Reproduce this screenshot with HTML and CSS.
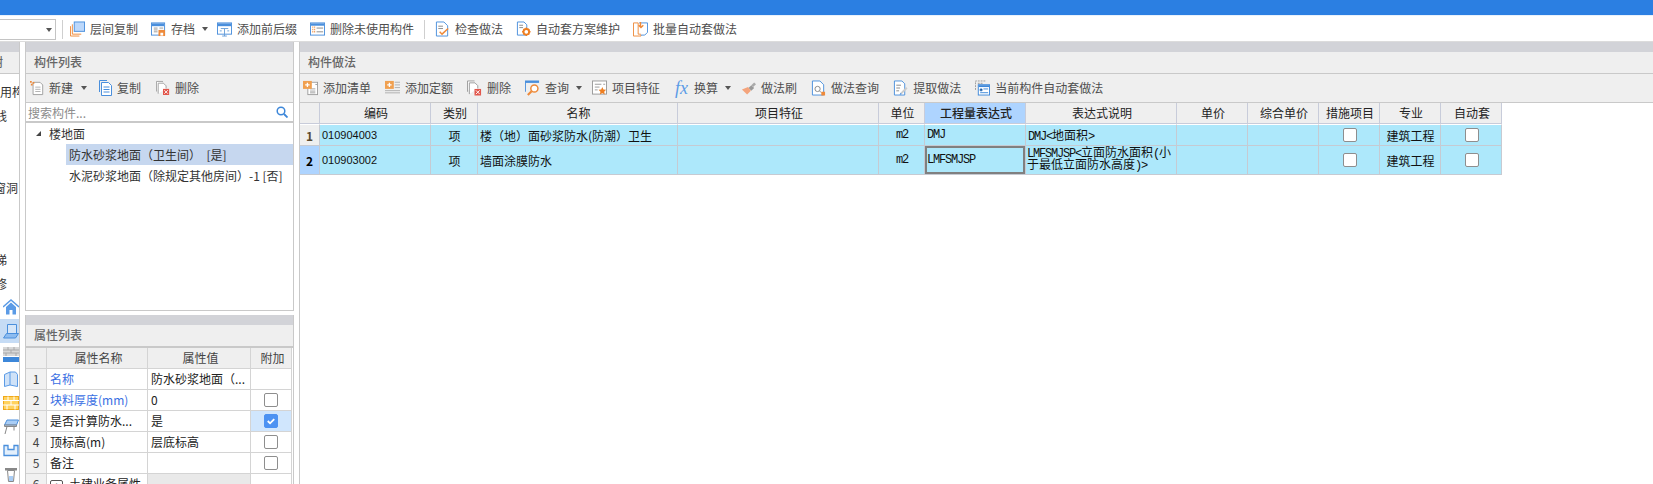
FILE: index.html
```html
<!DOCTYPE html>
<html lang="zh">
<head>
<meta charset="utf-8">
<title>构件做法</title>
<link rel="stylesheet" href="styles.css">
</head>
<body>
<div class="titlebar"></div>
<div class="maintools">
  <div class="combo"><span class="caret"></span></div>
  <span class="sep first"></span>
  <div class="tool"><svg viewBox="0 0 16 16"><rect x="4.500" y=".5" width="11" height="10" fill="#bcd8fb" stroke="#4a8fdc"/><path d="M2.500 3v10.500H12M.5 5v10.500H10" fill="none" stroke="#ee8a3a"/></svg><span>层间复制</span></div>
  <div class="tool"><svg viewBox="0 0 16 16"><rect x=".5" y="1.500" width="14" height="13" fill="#fff" stroke="#4a8fdc"/><rect x="1" y="2" width="13" height="3" fill="#4a8fdc"/><path d="M3 7h4M3 9h4M3 11h4M9 7h4" stroke="#999"/><rect x="8" y="9" width="7" height="6.500" fill="#ee8a3a"/><rect x="10" y="12" width="3" height="3" fill="#fff"/></svg><span>存档</span><span class="caret"></span></div>
  <div class="tool"><svg viewBox="0 0 16 16"><rect x=".5" y="1.500" width="15" height="12" fill="#fff" stroke="#4a8fdc"/><rect x="1" y="2" width="14" height="3" fill="#4a8fdc"/><path d="M4 7.500h8M8 7.500v8M5.500 15.500h5M3 10h2M11 10h2" stroke="#6a9fd8" fill="none"/></svg><span>添加前后缀</span></div>
  <div class="tool"><svg viewBox="0 0 16 16"><rect x=".5" y="1.500" width="15" height="13" fill="#fff" stroke="#4a8fdc"/><rect x="1" y="2" width="14" height="2.500" fill="#4a8fdc"/><path d="M2.500 6h3M2.500 8.500h3M2.500 11h3" stroke="#ee8a3a" stroke-width="1.500" stroke-dasharray="1 1"/><path d="M7 7h7M7 11h7" stroke="#888"/></svg><span>删除未使用构件</span></div>
  <span class="sep"></span>
  <div class="tool"><svg viewBox="0 0 16 16"><path d="M1.500.5h8l4 4v11h-12z" fill="#fff" stroke="#4a8fdc"/><path d="M3.500 5h5M3.500 7.500h5" stroke="#888"/><path d="M5 11l2.500 2.500L14 7.500" fill="none" stroke="#ee8a3a" stroke-width="1.600"/></svg><span>检查做法</span></div>
  <div class="tool"><svg viewBox="0 0 16 16"><path d="M1.500.5h7l3 3v11h-10z" fill="#fff" stroke="#4a8fdc"/><path d="M3.500 4h4M3.500 6.500h4" stroke="#888"/><circle cx="11" cy="11" r="3" fill="#fff" stroke="#ee7f22" stroke-width="2"/><path d="M11 6.500v2M11 13.500v2M6.500 11h2M13.500 11h2M8 8l1 1M13 13l1 1M14 8l-1 1M9 13l-1 1" stroke="#ee7f22" stroke-width="1.500"/></svg><span>自动套方案维护</span></div>
  <div class="tool"><svg viewBox="0 0 16 16"><path d="M.5 1.500h5v12h3v2h-8z" fill="#fff" stroke="#ee8a3a" stroke-width="1"/><path d="M6.500 1.500h9v10l-3 3h-4" fill="#fff" stroke="#4a8fdc"/><path d="M8 .5v5M6 4l2.500 2.500L11 4" fill="none" stroke="#ee8a3a" stroke-width="1.500"/></svg><span>批量自动套做法</span></div>
</div>

<div class="workspace">
  <aside class="strip">
    <div class="band"></div>
    <div class="title strip-title">树</div>
    <div class="nav">
      <div class="nav-row">用构件</div>
      <div class="nav-row cut">线</div>
      <div class="nav-row"></div>
      <div class="nav-row"></div>
      <div class="nav-row cut-wide">窗洞</div>
      <div class="nav-row"></div>
      <div class="nav-row"></div>
      <div class="nav-row cut">梯</div>
      <div class="nav-row cut">修</div>
      <div class="nav-row"><svg viewBox="0 0 16 16"><path d="M0 8l8-7 8 7" fill="none" stroke="#5b9be6" stroke-width="1.500"/><path d="M3 8l5-4.500L13 8v7.500H9.500V11h-3v4.500H3z" fill="#5b9be6"/></svg></div>
      <div class="nav-row active"><svg viewBox="0 0 16 16"><path d="M4.500 1.500h9v9h-9z" fill="#d6e6f8" stroke="#4a8fdc"/><path d="M3.500 10.500h12l-3 4.500H.5z" fill="#8dbcf0" stroke="#4a8fdc"/></svg></div>
      <div class="nav-row"><svg viewBox="0 0 16 16"><rect y="0" width="16" height="9" fill="#d8d8d8"/><path d="M0 3h16M0 6h16M5 0v3M11 0v3M8 3v3M3 6v3M13 6v3" stroke="#aaa"/><rect y="10" width="16" height="5" fill="#3d87d9"/></svg></div>
      <div class="nav-row"><svg viewBox="0 0 16 16"><path d="M1.500 3.500L7 1v13l-5.500 1.500zM7 1h5.500l2 2.500v12L7 14" fill="#cfe2f8" stroke="#5b9be6"/></svg></div>
      <div class="nav-row"><svg viewBox="0 0 16 16"><rect x=".5" y="1.500" width="15" height="13" fill="#ffd25e" stroke="#f0a818"/><path d="M0 5.500h16M0 10h16M5 1.500v4M11 1.500v4M8 5.500V10M4 10v4.500M12 10v4.500" stroke="#fff"/></svg></div>
      <div class="nav-row"><svg viewBox="0 0 16 16"><path d="M4 1h11.500l-2 5H1.500z" fill="#a9cdf5" stroke="#4a8fdc"/><path d="M1.500 6h12v1.500h-12zM4 7.500L2 15M11 7.500v4" fill="none" stroke="#888"/></svg></div>
      <div class="nav-row"><svg viewBox="0 0 16 16"><path d="M1 2.500h4v4h6v-4h4v10H1z" fill="#e4f0fc" stroke="#4a8fdc" stroke-width="1.300"/></svg></div>
      <div class="nav-row"><svg viewBox="0 0 16 16"><path d="M2 1h12v2.500H2z" fill="#888"/><path d="M4.500 3.500h7l-1 11h-5z" fill="#fff" stroke="#888"/><path d="M6 9h4v5H6z" fill="#a9cdf5"/></svg></div>
    </div>
  </aside>

  <div class="middle">
    <section class="panel list-panel">
      <div class="band"></div>
      <div class="title">构件列表</div>
      <div class="subtools list-tools">
        <div class="tool t-new"><svg viewBox="0 0 16 16"><path d="M3.500 1.500h8l3 3v11h-11z" fill="#fff" stroke="#999"/><path d="M6 7h6M6 9.500h6M6 12h6" stroke="#aaa"/><path d="M0 0h2v2H0zM3 1h2v2H3zM1 3h2v2H1z" fill="#ee8a3a"/></svg><span>新建</span><span class="caret"></span></div>
        <div class="tool t-copy"><svg viewBox="0 0 13 16"><path d="M.5 12V.5H8" fill="none" stroke="#4a8fdc"/><path d="M2.500 2.500h7l3 3v10h-10z" fill="#fff" stroke="#4a8fdc"/><path d="M4.500 7h6M4.500 9.500h6M4.500 12h6" stroke="#4a8fdc"/></svg><span>复制</span></div>
        <div class="tool t-del"><svg viewBox="0 0 16 16"><path d="M.5 12V.5H8M2.500 14.500v-12h6l3 3v3" fill="#fff" stroke="#999"/><rect x="8" y="9" width="7" height="7" fill="#e2574c"/><path d="M9.500 10.500l4 4M13.500 10.500l-4 4" stroke="#fff"/></svg><span>删除</span></div>
      </div>
      <div class="search"><span class="placeholder">搜索构件...</span><svg viewBox="0 0 12 12"><circle cx="5" cy="5" r="3.800" fill="none" stroke="#3d87d9" stroke-width="1.500"/><path d="M8 8l3.500 3.500" stroke="#3d87d9" stroke-width="1.800"/></svg></div>
      <div class="tree">
        <div class="tree-root"><span class="twist"></span>楼地面</div>
        <div class="tree-item selected">防水砂浆地面（卫生间）  [是]</div>
        <div class="tree-item">水泥砂浆地面（除规定其他房间）-1 [否]</div>
      </div>
    </section>

    <section class="panel attr-panel">
      <div class="band"></div>
      <div class="title attr-title">属性列表</div>
      <table class="attr">
        <colgroup><col class="a0"><col class="a1"><col class="a2"><col class="a3"></colgroup>
        <thead><tr><th></th><th>属性名称</th><th>属性值</th><th>附加</th></tr></thead>
        <tbody>
          <tr><td class="idx">1</td><td class="link">名称</td><td>防水砂浆地面（...</td><td></td></tr>
          <tr><td class="idx">2</td><td class="link">块料厚度(mm)</td><td>0</td><td class="ck"><span class="box"></span></td></tr>
          <tr><td class="idx">3</td><td>是否计算防水...</td><td>是</td><td class="ck on"><span class="box checked"><svg viewBox="0 0 13 13"><path d="M3 6.500l2.500 2.500L10 4.500" fill="none" stroke="#fff" stroke-width="2"/></svg></span></td></tr>
          <tr><td class="idx">4</td><td>顶标高(m)</td><td>层底标高</td><td class="ck"><span class="box"></span></td></tr>
          <tr><td class="idx">5</td><td>备注</td><td></td><td class="ck"><span class="box"></span></td></tr>
          <tr><td class="idx">6</td><td class="group"><span class="plus">+</span>土建业务属性</td><td class="shade"></td><td></td></tr>
        </tbody>
      </table>
    </section>
  </div>

  <section class="panel right">
    <div class="band"></div>
    <div class="title">构件做法</div>
    <div class="subtools right-tools">
      <div class="tool"><svg viewBox="0 0 17 16"><rect x="5.500" y="1.500" width="11" height="14" fill="#fff" stroke="#999"/><path d="M8 9h6M8 11.500h6M8 13.500h6M14 4h2" stroke="#999"/><rect y="0" width="10" height="9" fill="#f0a050"/><path d="M5 2v5M2.500 4.500h5" stroke="#fff" stroke-width="1.500"/></svg><span>添加清单</span></div>
      <div class="tool"><svg viewBox="0 0 17 16"><rect y="0" width="10" height="9" fill="#f0a050"/><path d="M5 2v5M2.500 4.500h5" stroke="#fff" stroke-width="1.500"/><path d="M11 1.500h6M11 4.500h6M11 7.500h6M0 11h17M0 13.500h17" stroke="#aaa"/></svg><span>添加定额</span></div>
      <div class="tool"><svg viewBox="0 0 16 16"><path d="M.5 12V.5H8M2.500 14.500v-12h6l3 3v3" fill="#fff" stroke="#999"/><rect x="8" y="9" width="7" height="7" fill="#e2574c"/><path d="M9.500 10.500l4 4M13.500 10.500l-4 4" stroke="#fff"/></svg><span>删除</span></div>
      <div class="tool"><svg viewBox="0 0 16 16"><path d="M.5 12V1.500h14" fill="none" stroke="#4a8fdc"/><rect y="0" width="15" height="2.500" fill="#4a8fdc"/><circle cx="10" cy="8.500" r="3.800" fill="#fff" stroke="#ee8a3a" stroke-width="1.600"/><path d="M7 11.500L3 15.500" stroke="#ee8a3a" stroke-width="2.200"/></svg><span>查询</span><span class="caret"></span></div>
      <div class="tool"><svg viewBox="0 0 16 16"><rect x=".5" y=".5" width="15" height="14" fill="#fff" stroke="#999"/><path d="M3 4h7M3 7h5M3 10h3M12 4h2" stroke="#999"/><path d="M11 7l1.200 2.600 2.800.3-2 2 .6 2.900-2.600-1.400-2.600 1.400.6-2.900-2-2 2.800-.3z" fill="#ee7f22"/></svg><span>项目特征</span></div>
      <div class="tool fx"><i>fx</i><span>换算</span><span class="caret"></span></div>
      <div class="tool"><svg viewBox="0 0 16 16"><path d="M8 8l3-3 3 3-3 3z" fill="#999"/><path d="M11 5l3-3 2 2-3 3z" fill="#aaa"/><path d="M7.500 7L1 9.500l5.500 5.500 4-4z" fill="#f4a47c"/></svg><span>做法刷</span></div>
      <div class="tool"><svg viewBox="0 0 16 16"><path d="M1.500.5h8l4 4v11h-12z" fill="#fff" stroke="#4a8fdc"/><circle cx="7" cy="9" r="2.800" fill="none" stroke="#888"/><path d="M9 11l2 2" stroke="#888"/><rect x="11" y="12" width="4" height="4" fill="#ee8a3a"/></svg><span>做法查询</span></div>
      <div class="tool"><svg viewBox="0 0 16 16"><path d="M1.500.5h8l3 3v12h-11z" fill="#fff" stroke="#4a8fdc"/><path d="M3.500 5h5M3.500 8h4M3.500 11h3" stroke="#888"/><path d="M8 13l6-6 1.500 1.500-6 6z" fill="#ccc"/><path d="M8 13l-1 2.500 2.500-1z" fill="#4a8fdc"/></svg><span>提取做法</span></div>
      <div class="tool"><svg viewBox="0 0 16 16"><path d="M.5 10V.5H11M3 3h6" fill="none" stroke="#999" stroke-dasharray="2 1"/><rect x="3.500" y="4.500" width="12" height="11" fill="#fff" stroke="#3d87d9"/><rect x="4" y="5" width="11" height="2" fill="#3d87d9"/><path d="M5.500 9h2v2h-2zM9 9h5M5.500 13h8.500" stroke="#3d87d9"/></svg><span>当前构件自动套做法</span></div>
    </div>
    <table class="grid">
      <colgroup>
        <col class="g0"><col class="g1"><col class="g2"><col class="g3"><col class="g4"><col class="g5"><col class="g6"><col class="g7"><col class="g8"><col class="g9"><col class="g10"><col class="g11"><col class="g12">
      </colgroup>
      <thead>
        <tr><th></th><th>编码</th><th>类别</th><th>名称</th><th>项目特征</th><th>单位</th><th class="picked">工程量表达式</th><th>表达式说明</th><th>单价</th><th>综合单价</th><th>措施项目</th><th>专业</th><th>自动套</th></tr>
      </thead>
      <tbody>
        <tr class="r1">
          <td class="num">1</td><td class="code">010904003</td><td class="mid">项</td><td>楼（地）面砂浆防水(防潮）卫生</td><td></td><td class="mono mid"><span class="lat">m2</span></td><td class="mono"><span class="lat">DMJ</span></td><td class="mono"><span class="lat">DMJ&lt;</span>地面积<span class="lat">&gt;</span></td><td></td><td></td><td class="mid"><span class="box"></span></td><td class="mid">建筑工程</td><td class="mid"><span class="box"></span></td>
        </tr>
        <tr class="r2">
          <td class="num cur">2</td><td class="code">010903002</td><td class="mid">项</td><td>墙面涂膜防水</td><td></td><td class="mono mid"><span class="lat">m2</span></td><td class="mono active-cell"><span class="lat">LMFSMJSP</span></td><td class="mono note"><span class="lat">LMFSMJSP&lt;</span>立面防水面积<span class="lat">(</span>小于最低立面防水高度<span class="lat">)&gt;</span></td><td></td><td></td><td class="mid"><span class="box"></span></td><td class="mid">建筑工程</td><td class="mid"><span class="box"></span></td>
        </tr>
      </tbody>
    </table>
  </section>
</div>
</body>
</html>
```

FILE: styles.css
```css
* { box-sizing: border-box; }

html, body {
  margin: 0;
  height: 484px;
  overflow: hidden;
  background: #fff;
}

body {
  font-family: "Noto Sans CJK SC", "Liberation Sans", sans-serif;
  font-size: 12px;
  color: #222;
}

svg { display: block; flex: none; }

.titlebar {
  height: 15px;
  background: #2b7fe2;
}

.maintools {
  display: flex;
  align-items: center;
  height: 27px;
  padding-top: 1px;
  background: #fff;
  border-top: 1px solid #e8f1fc;
  border-bottom: 1px solid #dcdcdc;
  gap: 13px;
}

.combo {
  position: relative;
  width: 56px;
  height: 21px;
  border: 1px solid #c4c4c4;
  border-left: 0;
  margin-right: -4px;
}

.combo .caret {
  position: absolute;
  right: 3px;
  top: 8px;
  margin: 0;
}

.sep {
  width: 1px;
  height: 19px;
  background: #cfcfcf;
  margin: 0 -3px;
}

.sep.first { margin-right: -6px; }

.tool {
  display: flex;
  align-items: center;
  gap: 5px;
  color: #4e4e4e;
  line-height: 16px;
  white-space: nowrap;
}

.tool svg { width: 15px; height: 16px; }

.caret {
  width: 0;
  height: 0;
  margin-left: 2px;
  margin-right: -4px;
  border-left: 3.5px solid transparent;
  border-right: 3.5px solid transparent;
  border-top: 4px solid #555;
}

.workspace {
  display: flex;
  height: 442px;
  gap: 5px;
}

.band {
  flex: none;
  height: 10px;
  background: #d2d3d8;
}

.title {
  flex: none;
  height: 22px;
  padding-left: 8px;
  line-height: 20px;
  font-weight: 500;
  color: #666;
  background: #efefef;
  border-bottom: 1px solid #c9c9c9;
}

.strip {
  width: 20px;
  flex: none;
  overflow: hidden;
  border-right: 1px solid #c9c9c9;
}

.strip-title {
  padding-left: 0;
  text-indent: -9px;
  overflow: hidden;
  white-space: nowrap;
}

.nav { padding-top: 5px; }

.nav-row {
  display: flex;
  align-items: center;
  height: 24px;
  padding-left: 3px;
  overflow: hidden;
  white-space: nowrap;
  color: #333;
}

.nav-row:first-child { padding-left: 0; }
.nav-row.cut { padding-left: 0; text-indent: -5px; }
.nav-row.cut-wide { padding-left: 0; text-indent: -6px; }

.nav-row.active { background: #c6dcf5; }

.middle {
  width: 269px;
  flex: none;
  display: flex;
  flex-direction: column;
  gap: 4px;
}

.panel {
  display: flex;
  flex-direction: column;
  border-left: 1px solid #c9c9c9;
}

.list-panel {
  flex: none;
  height: 269px;
  border-right: 1px solid #c9c9c9;
  border-bottom: 1px solid #c9c9c9;
}

.subtools {
  flex: none;
  display: flex;
  align-items: center;
  height: 29px;
  background: #efefef;
  border-bottom: 1px solid #c9c9c9;
  gap: 14px;
}

.list-tools { padding-left: 4px; }

.t-new svg { width: 14px; }
.t-new .caret { margin-left: 3px; margin-right: -2px; }
.t-copy svg { width: 13px; }
.t-del { margin-left: 1px; }
.t-del svg { width: 14px; }

.search {
  display: flex;
  align-items: center;
  justify-content: space-between;
  height: 20px;
  padding: 1px 5px 1px 2px;
  background: #fff;
  border-bottom: 2px solid #c9c9c9;
}

.placeholder { color: #8c8c8c; }

.search svg { width: 12px; height: 12px; }

.tree {
  display: flex;
  flex-direction: column;
}

.tree-root {
  display: flex;
  align-items: center;
  height: 21px;
  padding-left: 10px;
  color: #333;
}

.twist {
  width: 0;
  height: 0;
  margin-right: 8px;
  margin-top: -1px;
  border-bottom: 5px solid #444;
  border-left: 5px solid transparent;
}

.tree-item {
  height: 21px;
  margin-left: 40px;
  padding-left: 3px;
  line-height: 21px;
  white-space: pre;
  color: #333;
}

.tree-item + .tree-item { height: 22px; }

.tree-item.selected { background: #c6d7ef; }

.attr-panel {
  flex: 1;
  min-height: 0;
  overflow: hidden;
  border-right: 1px solid #c9c9c9;
}

.attr-title {
  border-bottom: 2px solid #c9c9c9;
  height: 23px;
}

table {
  border-collapse: separate;
  border-spacing: 0;
  table-layout: fixed;
}

.attr { width: 266px; flex: none; }
.a0 { width: 21px; }
.a1 { width: 101px; }
.a2 { width: 103px; }
.a3 { width: 41px; }

.attr th, .attr td {
  height: 21px;
  padding: 0 0 0 3px;
  font-weight: 400;
  border-right: 1px solid #d4d4d4;
  border-bottom: 1px solid #d4d4d4;
  white-space: nowrap;
  overflow: hidden;
  line-height: 20px;
}

.attr th {
  text-align: center;
  background: #efefef;
  color: #444;
}

.attr td.idx {
  padding: 0;
  text-align: center;
  background: #f1f1f1;
  color: #444;
}

.attr td.link { color: #3a6fe3; }

.attr td.ck { padding: 0; }
.attr td.ck.on { background: #d0e6fd; }
.attr td.shade { background: #e9e9e9; }

.plus {
  display: inline-block;
  width: 13px;
  height: 13px;
  margin-right: 6px;
  border: 1px solid #555;
  border-radius: 2px;
  line-height: 10px;
  text-align: center;
  vertical-align: -2px;
}

.box {
  display: block;
  width: 14px;
  height: 14px;
  margin: 0 auto;
  background: #fff;
  border: 1px solid #8e8e8e;
  border-radius: 2px;
}

.box.checked {
  background: #4c92f2;
  border-color: #4c92f2;
}

.box.checked svg { width: 12px; height: 12px; }

.right { flex: 1; min-width: 0; }

.right-tools { padding-left: 3px; }

.fx i {
  width: 14px;
  font-family: "Liberation Serif", serif;
  font-size: 18px;
  line-height: 16px;
  color: #5b9be6;
  margin-left: 1px;
}

.grid {
  width: 1202px;
  color: #111;
}

.g0 { width: 20px; }
.g1 { width: 111px; }
.g2 { width: 47px; }
.g3 { width: 200px; }
.g4 { width: 201px; }
.g5 { width: 46px; }
.g6 { width: 101px; }
.g7 { width: 151px; }
.g8 { width: 71px; }
.g9 { width: 71px; }
.g10 { width: 61px; }
.g11 { width: 61px; }
.g12 { width: 61px; }

.grid th {
  height: 21px;
  padding: 0 0 0 2px;
  font-weight: 400;
  background: #efefef;
  border-right: 1px solid #c8ccda;
  border-bottom: 1px solid #c8ccda;
  line-height: 20px;
  color: #222;
}

.grid th.picked {
  background: #aed4ff;
  font-weight: 500;
}

.grid td {
  padding: 0 0 0 2px;
  background: #ade8fb;
  border-right: 1px solid #c6cad2;
  border-bottom: 1px solid #c6cad2;
  white-space: nowrap;
  overflow: hidden;
}

.r1 td { height: 22px; border-top: 1px solid #fff; }
.r2 td { height: 29px; }

.grid td.num {
  padding: 0;
  text-align: center;
  font-weight: 700;
  background: #efefef;
  color: #5a4a30;
}

.grid td.cur {
  background: #aed4ff;
  color: #000;
}

.grid td.code {
  font-family: "Liberation Sans", sans-serif;
  font-size: 11px;
}

.grid td.mid { padding: 0 0 0 1px; text-align: center; }

.mono {
  font-family: "Liberation Mono", "Noto Sans CJK SC", monospace;
  font-size: 12px;
}

.lat { letter-spacing: -1.2px; }

.grid td.note {
  padding: 0 0 0 1px;
  line-height: 12px;
  white-space: normal;
  word-break: break-all;
}

.grid td.active-cell { box-shadow: inset 0 0 0 2px #808080; }
```
